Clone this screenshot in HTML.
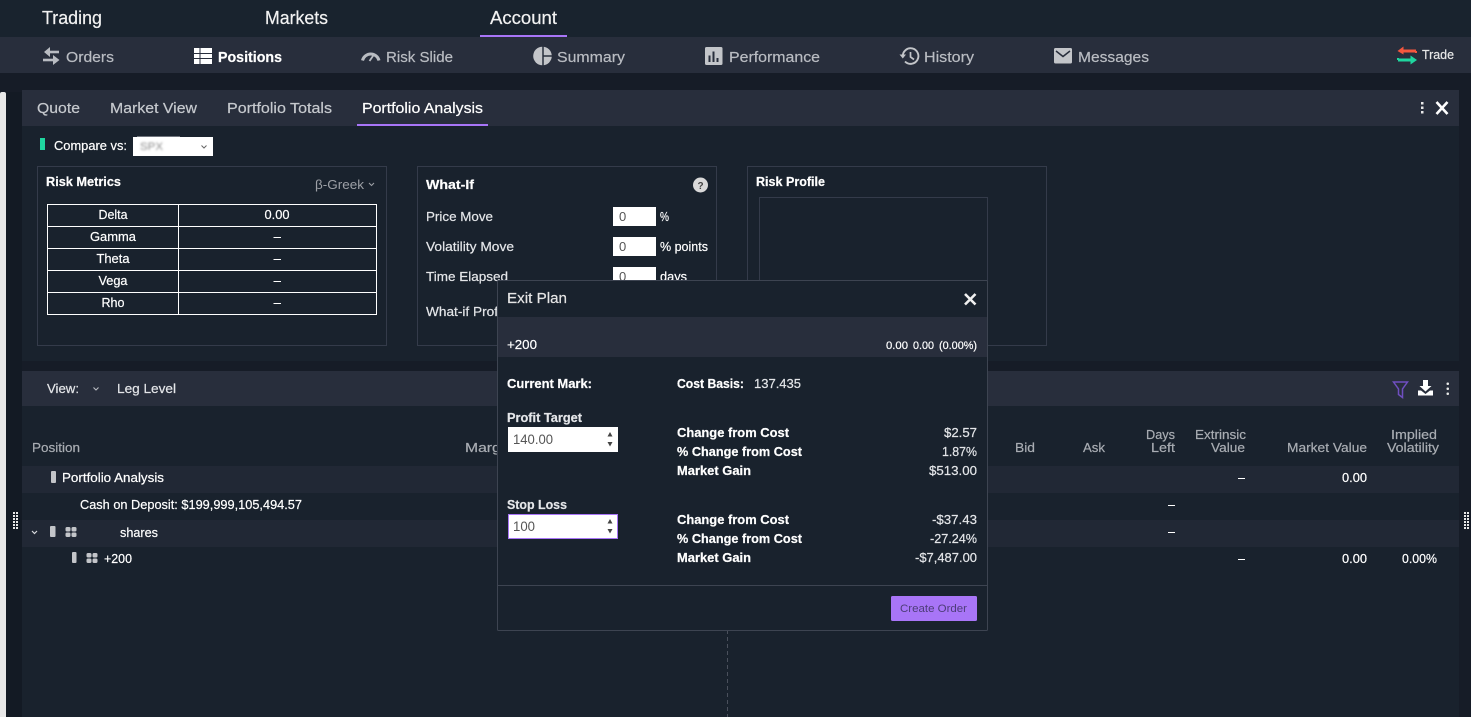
<!DOCTYPE html>
<html lang="en">
<head>
<meta charset="utf-8">
<title>Exit Plan</title>
<style>
html,body{margin:0;padding:0;width:1471px;height:717px;overflow:hidden;background:#161c27}
svg{display:block;position:absolute;left:0;top:0}
text{font-family:"Liberation Sans","DejaVu Sans",sans-serif;fill:#fff;stroke:#fff;stroke-width:.2;font-size:13px}
.nav{font-size:15px;fill:#b9bcc2;stroke:#b9bcc2}
.top{font-size:18px;fill:#f2f2f2;stroke:#f2f2f2}
.tab{font-size:15px;fill:#c6c9ce;stroke:#c6c9ce}
.b{font-weight:bold}
.l{fill:#e4e6e9;stroke:#e4e6e9}
.h{fill:#a9adb3;stroke:#a9adb3}
.c{text-anchor:middle}
.n{stroke:none}
</style>
</head>
<body>
<svg width="1471" height="717" viewBox="0 0 1471 717" xmlns="http://www.w3.org/2000/svg">
<defs><filter id="bl" x="-20%" y="-40%" width="140%" height="180%"><feGaussianBlur stdDeviation="1.100"/></filter></defs>
<!-- base -->
<rect width="1471" height="717" fill="#161c27"/>
<rect width="1471" height="37" fill="#19232e"/>
<rect y="37" width="1471" height="36" fill="#282e3c"/>
<rect x="6" y="92" width="16" height="625" fill="#131a24"/>
<rect x="0" y="92" width="6" height="640" rx="2" fill="#e8e8e8"/>

<!-- top nav -->
<text class="top" x="42" y="24" textLength="60" lengthAdjust="spacingAndGlyphs">Trading</text>
<text class="top" x="265" y="24" textLength="63" lengthAdjust="spacingAndGlyphs">Markets</text>
<text class="top" x="490" y="24" textLength="67" lengthAdjust="spacingAndGlyphs">Account</text>
<rect x="480" y="35" width="87" height="2" fill="#a875f7"/>

<!-- sub nav -->
<g fill="none" stroke="#b9bcc2" stroke-width="2.600">
<path d="M59 52H47"/>
<path d="M43 60H55"/>
</g>
<path d="M50 47V57L44 52ZM53 55V65L59.500 60Z" fill="#b9bcc2"/>
<text class="nav" x="66" y="62" textLength="48" lengthAdjust="spacingAndGlyphs">Orders</text>

<rect x="194" y="48" width="18" height="16" fill="#fff"/>
<path d="M194 53.500H212M194 58.500H212M200 48V64" stroke="#282e3c" stroke-width="1"/>
<text class="nav b" style="fill:#fff;stroke:#fff" x="218" y="62" textLength="64" lengthAdjust="spacingAndGlyphs">Positions</text>

<path d="M362.500 60.500A8.500 8.500 0 0 1 379 60.500" fill="none" stroke="#b9bcc2" stroke-width="3"/>
<path d="M369.500 61L374 54.500" stroke="#b9bcc2" stroke-width="1.800"/>
<text class="nav" x="386" y="62" textLength="67" lengthAdjust="spacingAndGlyphs">Risk Slide</text>

<circle cx="542.500" cy="56" r="9.300" fill="#c3c5c9"/>
<path d="M543 46.500V65.500M543 56H552" stroke="#282e3c" stroke-width="1.500"/>
<text class="nav" x="557" y="62" textLength="68" lengthAdjust="spacingAndGlyphs">Summary</text>

<rect x="705" y="47" width="17.500" height="18" rx="1.500" fill="#c3c5c9"/>
<path d="M709.500 55.500V62M713.500 51.500V62M717.500 58V62" stroke="#282e3c" stroke-width="2"/>
<text class="nav" x="729" y="62" textLength="91" lengthAdjust="spacingAndGlyphs">Performance</text>

<path d="M902.800 56.500A7.800 7.800 0 1 1 905 61.500" fill="none" stroke="#c3c5c9" stroke-width="1.900"/>
<path d="M899.500 54.500H906L902.800 58.500Z" fill="#c3c5c9"/>
<path d="M910.500 52V57L914 59.500" fill="none" stroke="#c3c5c9" stroke-width="1.700"/>
<text class="nav" x="924" y="62" textLength="50" lengthAdjust="spacingAndGlyphs">History</text>

<rect x="1054" y="48" width="18" height="15.500" rx="1.500" fill="#c3c5c9"/>
<path d="M1056 51L1063 56.500L1070 51" fill="none" stroke="#282e3c" stroke-width="1.500"/>
<text class="nav" x="1078" y="62" textLength="71" lengthAdjust="spacingAndGlyphs">Messages</text>

<path d="M1416 51H1400" stroke="#f4573e" stroke-width="3"/><path d="M1403.500 46.500L1397.500 51L1403.500 54.500Z" fill="#f4573e"/>
<path d="M1416 53V51" stroke="#f4573e" stroke-width="2"/>
<path d="M1398 60H1414" stroke="#1fd69f" stroke-width="3"/><path d="M1410.500 55.500L1417 60L1410.500 64.500Z" fill="#1fd69f"/>
<path d="M1398 58V60" stroke="#1fd69f" stroke-width="2"/>
<text style="font-size:13px;fill:#e8e8e8;stroke:#e8e8e8" x="1422" y="59" textLength="32" lengthAdjust="spacingAndGlyphs">Trade</text>

<!-- upper panel -->
<rect x="22" y="90" width="1437" height="271" fill="#19222d"/>
<rect x="22" y="90" width="1437" height="36" fill="#282e3c"/>
<text class="tab" x="37" y="113" textLength="43" lengthAdjust="spacingAndGlyphs">Quote</text>
<text class="tab" x="110" y="113" textLength="87" lengthAdjust="spacingAndGlyphs">Market View</text>
<text class="tab" x="227" y="113" textLength="105" lengthAdjust="spacingAndGlyphs">Portfolio Totals</text>
<text class="tab" style="fill:#fff;stroke:#fff" x="362" y="113" textLength="121" lengthAdjust="spacingAndGlyphs">Portfolio Analysis</text>
<rect x="357" y="124" width="131" height="2" fill="#a875f7"/>
<rect x="1421" y="102" width="2.500" height="2.500" fill="#e8e8e8"/><rect x="1421" y="106.500" width="2.500" height="2.500" fill="#e8e8e8"/><rect x="1421" y="111" width="2.500" height="2.500" fill="#e8e8e8"/>
<path d="M1436.500 102L1447.500 114M1447.500 102L1436.500 114" stroke="#fff" stroke-width="2.600"/>

<!-- compare -->
<rect x="40" y="138" width="5" height="12" fill="#1fd69f"/>
<text x="54" y="150" textLength="73" lengthAdjust="spacingAndGlyphs">Compare vs:</text>
<rect x="137" y="136" width="43" height="1.500" fill="#6f747d"/>
<rect x="133" y="137" width="80" height="19" fill="#fff"/>
<text class="n" style="font-size:11px;fill:#8c8c8c" filter="url(#bl)" x="140" y="150" textLength="23" lengthAdjust="spacingAndGlyphs">SPX</text>
<path d="M201.500 145.500L204 148L206.500 145.500" fill="none" stroke="#666" stroke-width="1"/>

<!-- risk metrics -->
<rect x="37.500" y="166.500" width="349" height="179" fill="none" stroke="#343b4a"/>
<text class="b" x="46" y="186" textLength="75" lengthAdjust="spacingAndGlyphs">Risk Metrics</text>
<text class="n" style="font-size:13px;fill:#9da0a6" x="315" y="189" textLength="49" lengthAdjust="spacingAndGlyphs">β-Greek</text>
<path d="M369 183L371.500 185.500L374 183" fill="none" stroke="#9da0a6" stroke-width="1.100"/>
<g fill="none" stroke="#fff" stroke-width="1">
<rect x="47.500" y="204.500" width="329" height="110"/>
<path d="M47.500 226.500H376.500M47.500 248.500H376.500M47.500 270.500H376.500M47.500 292.500H376.500M178.500 204.500V314.500"/>
</g>
<text class="c" x="113" y="219" textLength="29" lengthAdjust="spacingAndGlyphs">Delta</text>
<text class="c" x="277" y="219" textLength="25" lengthAdjust="spacingAndGlyphs">0.00</text>
<text class="c" x="113" y="241" textLength="46" lengthAdjust="spacingAndGlyphs">Gamma</text>
<text class="c" x="113" y="263" textLength="33" lengthAdjust="spacingAndGlyphs">Theta</text>
<text class="c" x="113" y="285" textLength="29" lengthAdjust="spacingAndGlyphs">Vega</text>
<text class="c" x="113" y="307" textLength="23" lengthAdjust="spacingAndGlyphs">Rho</text>
<path d="M273.500 237.500H281M273.500 259.500H281M273.500 281.500H281M273.500 303.500H281" stroke="#fff" stroke-width="1"/>

<!-- what-if -->
<rect x="417.500" y="166.500" width="299" height="179" fill="none" stroke="#343b4a"/>
<text class="b" x="426" y="189" textLength="48" lengthAdjust="spacingAndGlyphs">What-If</text>
<circle cx="700.500" cy="185" r="7.500" fill="#d9d9d9"/>
<text class="c b n" style="font-size:10px;fill:#444" x="700.500" y="189">?</text>
<text class="l" x="426" y="221" textLength="67" lengthAdjust="spacingAndGlyphs">Price Move</text>
<text class="l" x="426" y="251" textLength="88" lengthAdjust="spacingAndGlyphs">Volatility Move</text>
<text class="l" x="426" y="281" textLength="82" lengthAdjust="spacingAndGlyphs">Time Elapsed</text>
<text class="l" x="426" y="316" textLength="72" lengthAdjust="spacingAndGlyphs">What-if Prof</text>
<rect x="613" y="207" width="43" height="19" fill="#fff"/>
<rect x="613" y="237" width="43" height="19" fill="#fff"/>
<rect x="613" y="267" width="43" height="19" fill="#fff"/>
<text class="n" style="font-size:13px;fill:#555" x="619" y="221">0</text>
<text class="n" style="font-size:13px;fill:#555" x="619" y="251">0</text>
<text class="n" style="font-size:13px;fill:#555" x="619" y="281">0</text>
<text x="660" y="221" textLength="9" lengthAdjust="spacingAndGlyphs">%</text>
<text x="660" y="251" textLength="48" lengthAdjust="spacingAndGlyphs">% points</text>
<text x="660" y="281" textLength="27" lengthAdjust="spacingAndGlyphs">days</text>

<!-- risk profile -->
<rect x="747.500" y="166.500" width="299" height="179" fill="none" stroke="#343b4a"/>
<text class="b" x="756" y="186" textLength="69" lengthAdjust="spacingAndGlyphs">Risk Profile</text>
<rect x="759.500" y="197.500" width="228" height="130" fill="none" stroke="#343b4a"/>

<!-- lower panel -->
<rect x="22" y="371" width="1437" height="346" fill="#19222d"/>
<rect x="22" y="371" width="1437" height="35" fill="#282e3c"/>
<text class="l" x="47" y="393" textLength="32" lengthAdjust="spacingAndGlyphs">View:</text>
<path d="M93.500 387.500L96 390L98.500 387.500" fill="none" stroke="#b9bcc2" stroke-width="1.100"/>
<text class="l" x="117" y="393" textLength="59" lengthAdjust="spacingAndGlyphs">Leg Level</text>
<path d="M1393.500 382H1407.500L1402.500 389V397.500L1398.500 394.500V389Z" fill="none" stroke="#6f4fc0" stroke-width="1.500"/>
<path d="M1423 380H1428V386H1431.500L1425.500 391.500L1419.500 386H1423Z" fill="#fff"/>
<path d="M1418 390.500H1421L1425.500 394L1430 390.500H1433V395.500H1418Z" fill="#fff"/>
<rect x="1446.500" y="382.500" width="2.500" height="2.500" rx="1" fill="#e8e8e8"/><rect x="1446.500" y="387.500" width="2.500" height="2.500" rx="1" fill="#e8e8e8"/><rect x="1446.500" y="392.500" width="2.500" height="2.500" rx="1" fill="#e8e8e8"/>

<!-- table header -->
<text class="h" x="32" y="452" textLength="48" lengthAdjust="spacingAndGlyphs">Position</text>
<text class="h" x="465" y="452" textLength="48" lengthAdjust="spacingAndGlyphs">Margin</text>
<text class="h" x="1015" y="452" textLength="20" lengthAdjust="spacingAndGlyphs">Bid</text>
<text class="h" x="1083" y="452" textLength="22" lengthAdjust="spacingAndGlyphs">Ask</text>
<text class="h" x="1146" y="439" textLength="29" lengthAdjust="spacingAndGlyphs">Days</text>
<text class="h" x="1151" y="452" textLength="24" lengthAdjust="spacingAndGlyphs">Left</text>
<text class="h" x="1195" y="439" textLength="51" lengthAdjust="spacingAndGlyphs">Extrinsic</text>
<text class="h" x="1211" y="452" textLength="34" lengthAdjust="spacingAndGlyphs">Value</text>
<text class="h" x="1287" y="452" textLength="80" lengthAdjust="spacingAndGlyphs">Market Value</text>
<text class="h" x="1391" y="439" textLength="46" lengthAdjust="spacingAndGlyphs">Implied</text>
<text class="h" x="1387" y="452" textLength="52" lengthAdjust="spacingAndGlyphs">Volatility</text>

<!-- rows -->
<rect x="22" y="466" width="1437" height="27" fill="#212835"/>
<rect x="22" y="520" width="1437" height="27" fill="#212835"/>
<path d="M727.500 560V717" stroke="#4a505c" stroke-dasharray="4 3"/>

<rect x="51" y="471" width="5" height="12" rx="1" fill="#c3c5c9"/>
<text x="62" y="482" textLength="102" lengthAdjust="spacingAndGlyphs">Portfolio Analysis</text>
<text x="80" y="509" textLength="222" lengthAdjust="spacingAndGlyphs">Cash on Deposit: $199,999,105,494.57</text>
<path d="M32 531L34.500 533.500L37 531" fill="none" stroke="#d8dade" stroke-width="1.200"/>
<rect x="50" y="526" width="5.500" height="11" rx="1" fill="#c3c5c9"/>
<g fill="#c3c5c9"><rect x="65.500" y="527" width="5" height="4.500" rx="1.500"/><rect x="71.500" y="527" width="5" height="4.500" rx="1.500"/><rect x="65.500" y="532.500" width="5" height="4.500" rx="1.500"/><rect x="71.500" y="532.500" width="5" height="4.500" rx="1.500"/></g>
<text x="120" y="537" textLength="38" lengthAdjust="spacingAndGlyphs">shares</text>
<rect x="72" y="552" width="4.500" height="11" rx="1" fill="#c3c5c9"/>
<g fill="#c3c5c9"><rect x="86.500" y="553" width="5" height="4.500" rx="1.500"/><rect x="92.500" y="553" width="5" height="4.500" rx="1.500"/><rect x="86.500" y="558.500" width="5" height="4.500" rx="1.500"/><rect x="92.500" y="558.500" width="5" height="4.500" rx="1.500"/></g>
<text x="104" y="563" textLength="28" lengthAdjust="spacingAndGlyphs">+200</text>

<path d="M1238 478.500H1245M1168 505.500H1175M1168 532.500H1175M1238 559.500H1245" stroke="#fff" stroke-width="1"/>
<text x="1342" y="482" textLength="25" lengthAdjust="spacingAndGlyphs">0.00</text>
<text x="1342" y="563" textLength="25" lengthAdjust="spacingAndGlyphs">0.00</text>
<text x="1402" y="563" textLength="35" lengthAdjust="spacingAndGlyphs">0.00%</text>

<!-- grips -->
<g fill="#e8e8e8">
<rect x="13" y="512" width="2" height="2"/><rect x="16" y="512" width="2" height="2"/>
<rect x="13" y="515" width="2" height="2"/><rect x="16" y="515" width="2" height="2"/>
<rect x="13" y="518" width="2" height="2"/><rect x="16" y="518" width="2" height="2"/>
<rect x="13" y="521" width="2" height="2"/><rect x="16" y="521" width="2" height="2"/>
<rect x="13" y="524" width="2" height="2"/><rect x="16" y="524" width="2" height="2"/>
<rect x="13" y="527" width="2" height="2"/><rect x="16" y="527" width="2" height="2"/>
<rect x="1464" y="512" width="2" height="2"/><rect x="1467" y="512" width="2" height="2"/>
<rect x="1464" y="515" width="2" height="2"/><rect x="1467" y="515" width="2" height="2"/>
<rect x="1464" y="518" width="2" height="2"/><rect x="1467" y="518" width="2" height="2"/>
<rect x="1464" y="521" width="2" height="2"/><rect x="1467" y="521" width="2" height="2"/>
<rect x="1464" y="524" width="2" height="2"/><rect x="1467" y="524" width="2" height="2"/>
<rect x="1464" y="527" width="2" height="2"/><rect x="1467" y="527" width="2" height="2"/>
</g>

<!-- modal -->
<rect x="497.500" y="280.500" width="490" height="350" rx="1" fill="#19222d" stroke="#3d4451"/>
<text style="font-size:15px;fill:#e6e6e6;stroke:#e6e6e6" x="507" y="303" textLength="60" lengthAdjust="spacingAndGlyphs">Exit Plan</text>
<path d="M965 294L975.500 304.500M975.500 294L965 304.500" stroke="#f0f0f0" stroke-width="2.600"/>
<rect x="498" y="317" width="489" height="40" fill="#282e3c"/>
<text x="507" y="349" textLength="30" lengthAdjust="spacingAndGlyphs">+200</text>
<text style="font-size:11px" x="886" y="349" textLength="22" lengthAdjust="spacingAndGlyphs">0.00</text>
<text style="font-size:11px" x="913" y="349" textLength="21" lengthAdjust="spacingAndGlyphs">0.00</text>
<text style="font-size:11px" x="939" y="349" textLength="38" lengthAdjust="spacingAndGlyphs">(0.00%)</text>

<text class="b" x="507" y="388" textLength="85" lengthAdjust="spacingAndGlyphs">Current Mark:</text>
<text class="b" x="677" y="388" textLength="67" lengthAdjust="spacingAndGlyphs">Cost Basis:</text>
<text class="l" x="754" y="388" textLength="47" lengthAdjust="spacingAndGlyphs">137.435</text>

<text class="l b" x="507" y="422" textLength="75" lengthAdjust="spacingAndGlyphs">Profit Target</text>
<rect x="508" y="427" width="110" height="25" fill="#fff"/>
<text class="n" style="font-size:14px;fill:#555" x="513" y="444" textLength="40" lengthAdjust="spacingAndGlyphs">140.00</text>
<path d="M607.500 436.500L610 432L612.500 436.500ZM607.500 442L610 446.500L612.500 442Z" fill="#444"/>

<text class="b" x="677" y="437" textLength="112" lengthAdjust="spacingAndGlyphs">Change from Cost</text>
<text class="b" x="677" y="456" textLength="125" lengthAdjust="spacingAndGlyphs">% Change from Cost</text>
<text class="b" x="677" y="475" textLength="74" lengthAdjust="spacingAndGlyphs">Market Gain</text>
<text class="l" x="944" y="437" textLength="33" lengthAdjust="spacingAndGlyphs">$2.57</text>
<text class="l" x="942" y="456" textLength="35" lengthAdjust="spacingAndGlyphs">1.87%</text>
<text class="l" x="929" y="475" textLength="48" lengthAdjust="spacingAndGlyphs">$513.00</text>

<text class="l b" x="507" y="509" textLength="60" lengthAdjust="spacingAndGlyphs">Stop Loss</text>
<rect x="508.500" y="514.500" width="109" height="24" fill="#fff" stroke="#a875f7"/>
<text class="n" style="font-size:14px;fill:#555" x="513" y="531" textLength="22" lengthAdjust="spacingAndGlyphs">100</text>
<path d="M607.500 523.500L610 519L612.500 523.500ZM607.500 529L610 533.500L612.500 529Z" fill="#444"/>

<text class="b" x="677" y="524" textLength="112" lengthAdjust="spacingAndGlyphs">Change from Cost</text>
<text class="b" x="677" y="543" textLength="125" lengthAdjust="spacingAndGlyphs">% Change from Cost</text>
<text class="b" x="677" y="562" textLength="74" lengthAdjust="spacingAndGlyphs">Market Gain</text>
<text class="l" x="932" y="524" textLength="45" lengthAdjust="spacingAndGlyphs">-$37.43</text>
<text class="l" x="930" y="543" textLength="47" lengthAdjust="spacingAndGlyphs">-27.24%</text>
<text class="l" x="915" y="562" textLength="62" lengthAdjust="spacingAndGlyphs">-$7,487.00</text>

<path d="M498 585.500H987" stroke="#3d4451"/>
<rect x="891" y="596" width="86" height="25" rx="1.500" fill="#a875f7"/>
<text class="n" style="font-size:11px;fill:#4d3d78" x="900" y="612" textLength="67" lengthAdjust="spacingAndGlyphs">Create Order</text>
</svg>
</body>
</html>
